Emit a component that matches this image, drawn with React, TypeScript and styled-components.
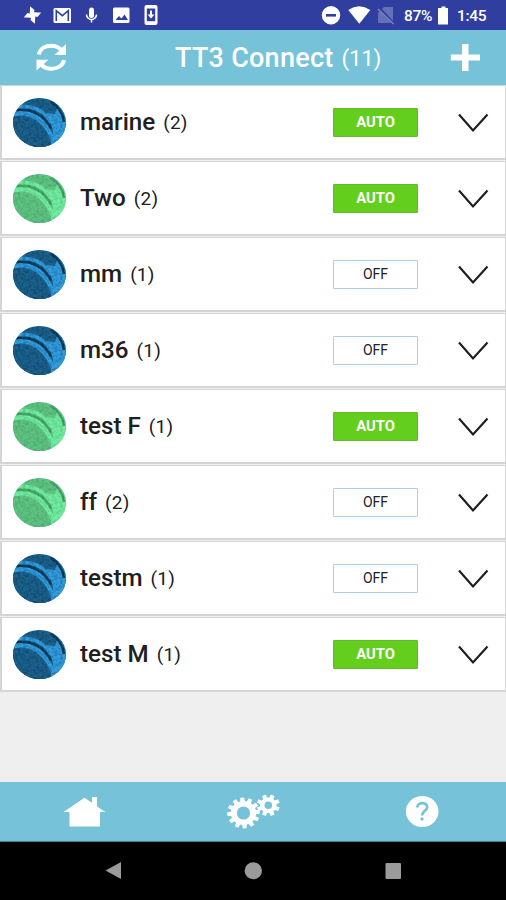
import React from "react";
import styled, { createGlobalStyle } from "styled-components";

const GlobalStyle = createGlobalStyle`
  * { box-sizing: border-box; }
  body { margin: 0; background: #000; font-family: Roboto, "Liberation Sans", sans-serif; }
  svg { display: block; overflow: visible; }
`;

const Screen = styled.div`
  width: 506px;
  height: 900px;
  display: flex;
  flex-direction: column;
  overflow: hidden;
  background: #efefef;
`;

const StatusBar = styled.header`
  height: 30px;
  flex: none;
  display: flex;
  justify-content: space-between;
  background: #303f9f;
  color: #fff;
`;

const StatusText = styled.span<{ $width: number }>`
  width: ${(p) => p.$width}px;
  font-size: 15.5px;
  font-weight: 500;
  line-height: 32px;
  letter-spacing: -0.3px;
  white-space: nowrap;
`;

const StatusRight = styled.div`
  display: flex;
  padding-right: 18px;
`;

const TitleBar = styled.div`
  height: 55px;
  flex: none;
  display: grid;
  grid-template-columns: 100px 1fr 81px;
  background: #75c2d9;
  color: #fff;
`;

const Title = styled.h1`
  margin: 0;
  padding-left: 75px;
  display: flex;
  align-items: baseline;
  font-size: 27px;
  line-height: 56px;
  font-weight: 500;
  letter-spacing: 0.25px;
  white-space: nowrap;
`;

const TitleCount = styled.span`
  margin-left: 8px;
  font-size: 22.5px;
  font-weight: 400;
  letter-spacing: -0.3px;
  transform: translateY(-1px);
`;

const List = styled.main`
  flex: 1;
  display: flex;
  flex-direction: column;
  gap: 1px;
`;

const Row = styled.section`
  height: 75px;
  flex: none;
  display: grid;
  grid-template-columns: 78px 253px 85px 1fr;
  align-items: center;
  background: #fff;
  border: solid #d5d5d5;
  border-width: 1px 1px 2px 2px;
`;

const Ball = styled.div`
  padding: 1px 0 0 11px;
`;

const Name = styled.div`
  display: flex;
  align-items: baseline;
  padding-top: 1px;
  color: #202020;
  font-size: 24.2px;
  font-weight: 500;
  line-height: 30px;
  white-space: nowrap;
`;

const Count = styled.span`
  margin-left: 8px;
  font-size: 19px;
  font-weight: 400;
  letter-spacing: 0.2px;
  transform: translateY(-1px);
`;

const Mode = styled.button<{ $auto: boolean }>`
  width: 85px;
  height: 29px;
  margin: 1px 0 0;
  padding: 0;
  border: 1px solid ${(p) => (p.$auto ? "#62b82e" : "#a8cfe2")};
  border-radius: 1px;
  background: ${(p) => (p.$auto ? "#63cf1c" : "#fff")};
  color: ${(p) => (p.$auto ? "#fff" : "#222")};
  font-family: inherit;
  font-size: ${(p) => (p.$auto ? "14.8px" : "14px")};
  font-weight: ${(p) => (p.$auto ? 700 : 400)};
  line-height: 27px;
`;

const Expand = styled.div`
  padding: 0 0 0 39px;
`;

const TabBar = styled.nav`
  height: 60px;
  flex: none;
  display: grid;
  grid-template-columns: 168px 170px 168px;
  background: #75c2d9;
  border-bottom: 1px solid #4a8292;
`;

const SystemBar = styled.footer`
  height: 58px;
  flex: none;
  background: #000;
`;

const NotificationIcons = () => (
  <svg width="170" height="30" fill="#fff">
    {[0, 90, 180, 270].map((turn) => (
      <path key={turn} d="M33 15.500h-3.500L30 9.500V6.300l4.500 3.700Z" transform={`rotate(${turn} 32.500 15)`} />
    ))}
    <rect x="53.500" y="8" width="17.500" height="15" rx="1.500" />
    <path d="M56.300 21V10.700l6 5 6-5V21" fill="none" stroke="#303f9f" strokeWidth="1.600" />
    <rect x="89" y="7.500" width="5" height="10.500" rx="2.500" />
    <path d="M86.500 14.500a5 5 0 0 0 10 0M91.500 19v3.500" fill="none" stroke="#fff" strokeWidth="1.600" />
    <rect x="113" y="7.500" width="16.500" height="15.500" rx="1.500" />
    <path d="m115.500 20 3.500-4 2.500 2.500 3-4 3.500 5.500Z" fill="#303f9f" />
    <rect x="144.500" y="5" width="13" height="20" rx="2" />
    <path d="M146.800 8.500h8.400v12.700h-8.400Z" fill="#303f9f" />
    <path d="M150 10.500h2v4h2.500l-3.500 4-3.500-4h2.500Z" />
  </svg>
);

const ConnectivityIcons = () => (
  <svg width="84" height="30" viewBox="320 0 84 30">
    <circle cx="331" cy="15.300" r="9.200" fill="#fff" />
    <path d="M326 15.300h10" stroke="#303f9f" strokeWidth="2.600" />
    <path d="M348.300 10q10.700-7.300 22 0l-11 13.700Z" fill="#fff" />
    <path d="M384 7h9v16h-15V13Z" fill="#6570b8" />
    <path d="m378 7 16 17" stroke="#303f9f" strokeWidth="3" />
    <path d="m378 9 15.500 15" stroke="#7983c1" strokeWidth="1.500" />
  </svg>
);

const BatteryIcon = () => (
  <svg width="24" height="30">
    <path d="M6 8h2.500V6.500h4V8H15v16.500H5V8Z" fill="#fff" />
  </svg>
);

const RefreshIcon = () => (
  <svg width="100" height="55" viewBox="0 30 100 55">
    <g fill="none" stroke="#fff" strokeWidth="4">
      <path d="M39 54.500C40 48.500 45.500 45.800 51 45.800c4.500 0 8.500 1.800 11 5" />
      <path d="M64 60c-1 6-7 8.800-12.500 8.800-4.500 0-8.500-1.800-11-5" />
    </g>
    <path d="M66 44v11H54.500ZM36.500 70.500V59.800H48.500Z" fill="#fff" />
  </svg>
);

const PlusIcon = () => (
  <svg width="81" height="55" viewBox="425 30 81 55">
    <path d="M462 44h6.500v10.500H480v6h-11.500V71H462V60.500h-11.200v-6H462Z" fill="#fff" />
  </svg>
);

const BallIcon = ({ green, id }: { green: boolean; id: string }) => {
  const [base, light, dark] = green
    ? ["#5dc382", "#70ee9f", "#45a468"]
    : ["#1a618e", "#309ee2", "#103c5c"];
  return (
    <svg width="53" height="49" viewBox="0 0 53 49">
      <defs>
        <clipPath id={`${id}-clip`}>
          <ellipse cx="26.500" cy="24.500" rx="26.500" ry="24.500" />
        </clipPath>
        <filter id={`${id}-grain`} x="0" y="0" width="100%" height="100%">
          <feTurbulence type="fractalNoise" baseFrequency="0.38" numOctaves="2" seed="4" />
          <feColorMatrix values="0 0 0 0 0  0 0 0 0 0  0 0 0 0 0  1.600 0 0 0 -0.620" />
        </filter>
      </defs>
      <g clipPath={`url(#${id}-clip)`}>
        <path d="M0 0h53v49H0Z" fill={base} />
        <path d="M36 22l-4-7 10 1 3-8c6 5 8 12 8 22v19H40c2-10 0-19-4-27Z" fill={light} />
        <path d="M4 9c14-2 26 2 34 15" fill="none" stroke={light} strokeWidth="3.500" />
        <path d="M0 16c19-5 35 8 41 31" fill="none" stroke={light} strokeWidth="5" />
        <path d="M2 12.500c15-3 29 4 36 18" fill="none" stroke={dark} strokeWidth="2.200" />
        <path d="M0 19c20-4 37 10 39 31H0Z" fill={base} />
        <path d="M38 4c8 5 12 11 13 20" fill="none" stroke={dark} strokeWidth="2.500" />
        <path d="M0 0h53v49H0Z" filter={`url(#${id}-grain)`} opacity={green ? 0.22 : 0.4} />
      </g>
    </svg>
  );
};

const Chevron = () => (
  <svg width="32" height="20">
    <path d="m2 2.500 14 16 14.500-16" fill="none" stroke="#1c1c1c" strokeWidth="2.100" />
  </svg>
);

const HomeIcon = () => (
  <svg width="168" height="60" viewBox="0 782 168 60">
    <path d="m63.500 812 21-14.200 7.500 5V797h5v9.500l8.500 5.500H100v14.500H69.500V812Z" fill="#fff" />
  </svg>
);

const gearPath = (cx: number, cy: number, outer: number, root: number, hole: number, teeth: number, turn: number) => {
  const points: string[] = [];
  for (let i = 0; i < teeth; i++) {
    for (const [offset, r] of [[-0.34, root], [-0.22, outer], [0.22, outer], [0.34, root]]) {
      const a = ((i + offset + turn) / teeth) * Math.PI * 2;
      points.push(`${(cx + r * 1.06 * Math.cos(a)).toFixed(2)} ${(cy + r * Math.sin(a)).toFixed(2)}`);
    }
  }
  return `M${points.join("L")}ZM${cx - hole} ${cy}a${hole} ${hole} 0 1 0 ${hole * 2} 0a${hole} ${hole} 0 1 0 ${-hole * 2} 0Z`;
};

const GearsIcon = () => (
  <svg width="170" height="60" viewBox="168 782 170 60" fill="#fff" fillRule="evenodd">
    <path d={gearPath(243.500, 813, 15.500, 12, 6.600, 12, -0.15)} />
    <path d={gearPath(268.300, 805.200, 11, 7.800, 3.800, 8, 0.5)} />
  </svg>
);

const HelpIcon = () => (
  <svg width="168" height="60" viewBox="338 782 168 60">
    <ellipse cx="422.200" cy="811.500" rx="16.300" ry="15.500" fill="#fff" />
    <path d="M417.300 807.500c.2-5.800 9.900-5.600 9.900-.4 0 4-5.200 3.600-5.200 8.300" fill="none" stroke="#75c2d9" strokeWidth="2.700" />
    <circle cx="422" cy="819" r="1.700" fill="#75c2d9" />
  </svg>
);

const SystemIcons = () => (
  <svg width="506" height="58" viewBox="0 842 506 58" fill="#9b9b9b">
    <path d="M121 862v17l-15.500-8.500Z" />
    <ellipse cx="253.300" cy="870.800" rx="8.700" ry="8.500" />
    <rect x="385.500" y="863" width="15.500" height="16" rx="1" />
  </svg>
);

const groups = [
  { name: "marine", count: 2, auto: true, green: false },
  { name: "Two", count: 2, auto: true, green: true },
  { name: "mm", count: 1, auto: false, green: false },
  { name: "m36", count: 1, auto: false, green: false },
  { name: "test F", count: 1, auto: true, green: true },
  { name: "ff", count: 2, auto: false, green: true },
  { name: "testm", count: 1, auto: false, green: false },
  { name: "test M", count: 1, auto: true, green: false },
];

export default function App() {
  return (
    <Screen>
      <GlobalStyle />
      <StatusBar>
        <NotificationIcons />
        <StatusRight>
          <ConnectivityIcons />
          <StatusText $width={29}>87%</StatusText>
          <BatteryIcon />
          <StatusText $width={31}>1:45</StatusText>
        </StatusRight>
      </StatusBar>
      <TitleBar>
        <RefreshIcon />
        <Title>
          TT3 Connect<TitleCount>(11)</TitleCount>
        </Title>
        <PlusIcon />
      </TitleBar>
      <List>
        {groups.map((g, i) => (
          <Row key={g.name}>
            <Ball>
              <BallIcon green={g.green} id={`ball${i}`} />
            </Ball>
            <Name>
              {g.name}
              <Count>({g.count})</Count>
            </Name>
            <Mode $auto={g.auto}>{g.auto ? "AUTO" : "OFF"}</Mode>
            <Expand>
              <Chevron />
            </Expand>
          </Row>
        ))}
      </List>
      <TabBar>
        <HomeIcon />
        <GearsIcon />
        <HelpIcon />
      </TabBar>
      <SystemBar>
        <SystemIcons />
      </SystemBar>
    </Screen>
  );
}
